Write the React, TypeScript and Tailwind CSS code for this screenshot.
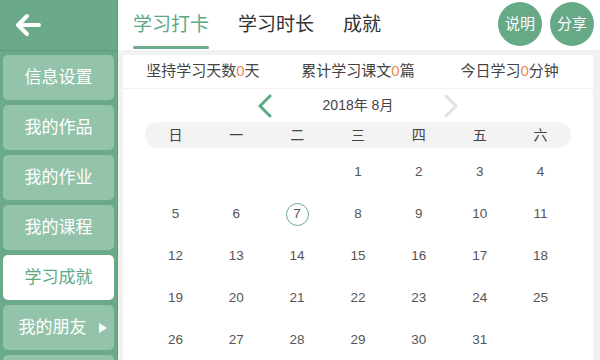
import React from 'react';

const menu = ['信息设置', '我的作品', '我的作业', '我的课程', '学习成就', '我的朋友', ''];
const weekdays = ['日', '一', '二', '三', '四', '五', '六'];

// August 2018 starts on a Wednesday
const days: (number | null)[] = [null, null, null, ...Array.from({ length: 31 }, (_, i) => i + 1)];

const font = { fontFamily: '"Liberation Sans", "Noto Sans CJK SC", sans-serif' };

export default function App() {
  return (
    <div className="w-[600px] h-[360px] flex overflow-hidden bg-[#f2f2f2]" style={font}>
      {/* sidebar */}
      <aside className="w-[118px] shrink-0 bg-[#6aaa8b] border-r border-[#5f9d7f] flex flex-col">
        <div className="h-[51px] shrink-0 border-b border-[#5e9a7d] flex items-center pl-[14px]">
          <svg width="28" height="24" viewBox="0 0 28 24" fill="none" stroke="white" strokeWidth="4" strokeLinecap="round" strokeLinejoin="round">
            <path d="M25 12H4M13 3L4 12l9 9" />
          </svg>
        </div>
        <div className="flex flex-col gap-[5px] px-[3px] pt-[4px]">
          {menu.map((m, i) => {
            const active = m === '学习成就';
            return (
              <div
                key={i}
                className={`h-[45px] shrink-0 rounded-[5px] flex items-center justify-center text-[17px] ${
                  active ? 'bg-white text-[#5ca985]' : 'bg-[#93c4ab] text-white'
                } ${m === '我的朋友' ? 'pl-[8px]' : ''}`}
              >
                <span>{m}</span>
                {m === '我的朋友' && (
                  <svg width="8" height="10" viewBox="0 0 8 10" className="ml-[12px]">
                    <path d="M0 0L8 5L0 10Z" fill="white" />
                  </svg>
                )}
              </div>
            );
          })}
        </div>
      </aside>

      {/* main */}
      <main className="flex-1 flex flex-col min-w-0">
        <header className="h-[50px] shrink-0 bg-white flex items-start pl-[15px] pr-[6px]">
          <div className="flex gap-[29px] pt-[12px] text-[19px] leading-[26px] text-[#333]">
            <div className="flex flex-col items-center">
              <span className="text-[#5ca985]">学习打卡</span>
              <div className="mt-[8px] h-[3px] w-full bg-[#6aaa8b] rounded-full" />
            </div>
            <span>学习时长</span>
            <span>成就</span>
          </div>
          <div className="ml-auto flex gap-[8px] pt-[2px]">
            <div className="w-[44px] h-[44px] rounded-full bg-[#67a887] text-white text-[15px] flex items-center justify-center">说明</div>
            <div className="w-[44px] h-[44px] rounded-full bg-[#67a887] text-white text-[15px] flex items-center justify-center">分享</div>
          </div>
        </header>

        <div className="flex-1 flex flex-col pl-[5px] pr-[7px] pt-[5px]">
          <div className="h-[33px] shrink-0 bg-white grid grid-cols-3 items-center text-[15px] text-[#444]">
            <div className="text-center pl-[3px]">坚持学习天数<span className="text-[#f0874a]">0</span>天</div>
            <div className="text-center">累计学习课文<span className="text-[#f0874a]">0</span>篇</div>
            <div className="text-center pr-[10px]">今日学习<span className="text-[#f0874a]">0</span>分钟</div>
          </div>

          <div className="flex-1 bg-white mt-[1px] px-[22px]">
            <div className="h-[33px] flex items-center justify-center">
              <svg width="16" height="24" viewBox="0 0 16 24" fill="none" stroke="#5ca985" strokeWidth="3" strokeLinecap="round" strokeLinejoin="round">
                <path d="M13 2L3 12l10 10" />
              </svg>
              <span className="mx-[50px] text-[14px] text-[#444]">2018年 8月</span>
              <svg width="16" height="24" viewBox="0 0 16 24" fill="none" stroke="#e2e2e2" strokeWidth="3" strokeLinecap="round" strokeLinejoin="round">
                <path d="M3 2l10 10L3 22" />
              </svg>
            </div>
            <div className="h-[26px] rounded-full bg-[#f3f3f3] grid grid-cols-7 items-center text-[14px] text-[#444]">
              {weekdays.map((w) => (
                <div key={w} className="text-center">{w}</div>
              ))}
            </div>
            <div className="grid grid-cols-7 auto-rows-[42px] pt-[3px] text-[13.5px] text-[#555]">
              {days.map((d, i) => (
                <div key={i} className="flex items-center justify-center">
                  {d !== null && (
                    <span
                      className={
                        d === 7
                          ? 'w-[23px] h-[23px] rounded-full border border-[#6aaa8b] flex items-center justify-center'
                          : ''
                      }
                    >
                      {d}
                    </span>
                  )}
                </div>
              ))}
            </div>
          </div>
        </div>
      </main>
    </div>
  );
}
